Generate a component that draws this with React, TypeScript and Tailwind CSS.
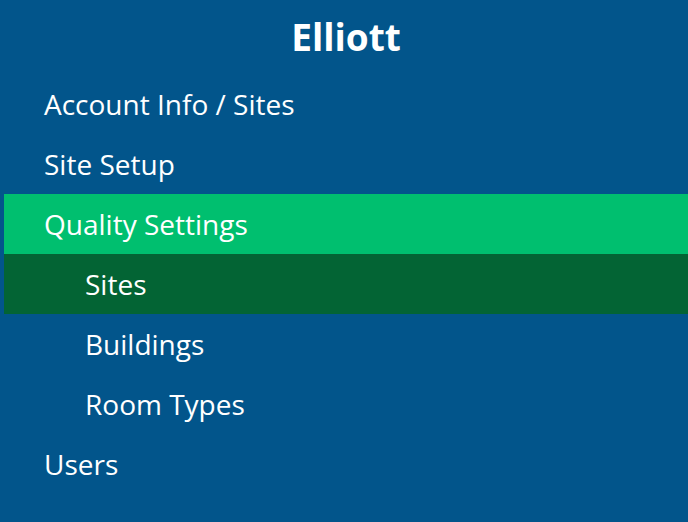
// sidebar nav with nested quality settings items

const items = [
  { label: "Account Info / Sites", level: 0, state: "" },
  { label: "Site Setup", level: 0, state: "" },
  { label: "Quality Settings", level: 0, state: "open" },
  { label: "Sites", level: 1, state: "active" },
  { label: "Buildings", level: 1, state: "" },
  { label: "Room Types", level: 1, state: "" },
  { label: "Users", level: 0, state: "" },
];

const App = () => {
  return (
    <div
      className="w-[688px] h-[522px] bg-[#02558b] pl-1 text-white overflow-hidden"
      style={{ fontFamily: '"Open Sans", sans-serif' }}
    >
      <h1 className="h-[74px] flex items-center justify-center text-[37px] font-bold">
        Elliott
      </h1>
      <ul>
        {items.map((item) => (
          <li
            key={item.label}
            className={
              "h-[60px] flex items-center text-[28px] " +
              (item.level === 1 ? "pl-[81px] " : "pl-10 ") +
              (item.state === "open"
                ? "bg-[#00bf6f]"
                : item.state === "active"
                ? "bg-[#036434]"
                : "")
            }
          >
            {item.label}
          </li>
        ))}
      </ul>
    </div>
  );
};

export default App;
